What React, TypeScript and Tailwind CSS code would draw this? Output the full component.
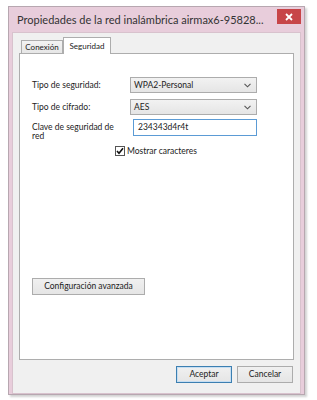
import { FC } from 'react'

const font = { fontFamily: 'Lato, "Noto Sans", sans-serif' }

const Chevron: FC = () => (
  <svg width="7" height="5" viewBox="0 0 7 5" className="text-[#555]">
    <path d="M0.5 0.8 L3.5 3.8 L6.5 0.8" fill="none" stroke="currentColor" strokeWidth="1.1" />
  </svg>
)

const SelectBox: FC<{ value: string }> = ({ value }) => (
  <div className="flex h-[16px] w-[127px] items-center justify-between border border-[#acacac] bg-gradient-to-b from-[#f2f2f2] to-[#e5e5e5] pl-[3px] pr-[5px] text-[8.5px] text-[#222]">
    <span>{value}</span>
    <Chevron />
  </div>
)

const WinButton: FC<{ label: string; w: string; primary?: boolean }> = ({ label, w, primary }) => (
  <div
    className={`flex h-[17px] items-center justify-center border bg-gradient-to-b from-[#f0f0f0] to-[#e5e5e5] text-[8.5px] text-[#222] ${w} ${
      primary ? 'border-[#3c7fb1] shadow-[inset_0_0_0_1px_#c6def2]' : 'border-[#acacac]'
    }`}>
    {label}
  </div>
)

const App: FC = () => {
  return (
    <div className="h-[400px] w-[317px] bg-white pl-[8px] pt-[6px]" style={font}>
      <div className="flex h-[389px] w-[297px] flex-col border border-[#b7a7b0] bg-[#e8cddb] shadow-[2px_2px_2px_rgba(0,0,0,0.18)]">
        {/* title bar */}
        <div className="flex h-[25px] items-start justify-between">
          <span className="mt-[5px] whitespace-nowrap pl-[8px] text-[11px] leading-[16px] text-[#333]">
            Propiedades de la red inalámbrica airmax6-95828...
          </span>
          <div className="mr-[3px] mt-[2px] flex h-[15px] w-[24px] shrink-0 items-center justify-center bg-[#c74548]">
            <svg width="8" height="8" viewBox="0 0 8 8">
              <path d="M1 1 L7 7 M7 1 L1 7" stroke="white" strokeWidth="1.8" />
            </svg>
          </div>
        </div>

        {/* client area */}
        <div className="mx-[3px] flex flex-1 flex-col border border-[#d8c2cd] bg-[#f0f0f0] px-[6px] pb-[6px] pt-[4px]">
          <div className="flex items-end pl-[2px]">
            <div className="flex h-[13px] w-[42px] items-center justify-center border border-b-0 border-[#adadad] bg-gradient-to-b from-[#f3f3f3] to-[#e6e6e6] text-[8px] text-[#222]">
              Conexión
            </div>
            <div className="relative -mb-px flex h-[17px] w-[48px] items-start justify-center border border-b-0 border-[#adadad] bg-white pt-[2px] text-[8px] text-[#222]">
              Seguridad
            </div>
          </div>

          <div className="flex h-[307px] flex-col border border-[#adadad] bg-white pl-[12px] pt-[23px] text-[8.5px] text-[#222]">
            <div className="flex items-center">
              <span className="w-[98px]">Tipo de seguridad:</span>
              <SelectBox value="WPA2-Personal" />
            </div>
            <div className="mt-[6px] flex items-center">
              <span className="w-[98px]">Tipo de cifrado:</span>
              <SelectBox value="AES" />
            </div>
            <div className="mt-[4px] flex items-start">
              <span className="w-[101px] pt-[4px] leading-[9px]">
                Clave de seguridad de
                <br />
                red
              </span>
              <div className="flex h-[17px] w-[124px] items-center border border-[#5b9bd5] bg-white pl-[4px]">
                234343d4r4t
              </div>
            </div>
            <div className="ml-[83px] mt-[5px] flex items-center gap-[2px]">
              <div className="flex h-[10px] w-[10px] items-center justify-center border border-[#555] bg-white">
                <svg width="8" height="8" viewBox="0 0 8 8">
                  <path d="M1 4 L3 6.3 L7 1.2" fill="none" stroke="#111" strokeWidth="1.6" />
                </svg>
              </div>
              <span className="leading-[10px]">Mostrar caracteres</span>
            </div>

            <div className="mt-[122px]">
              <WinButton label="Configuración avanzada" w="w-[113px]" />
            </div>
          </div>

          <div className="mt-[6px] flex justify-end gap-[5px] pr-[1px]">
            <WinButton label="Aceptar" w="w-[56px]" primary />
            <WinButton label="Cancelar" w="w-[56px]" />
          </div>
        </div>
      </div>
    </div>
  )
}

export default App
